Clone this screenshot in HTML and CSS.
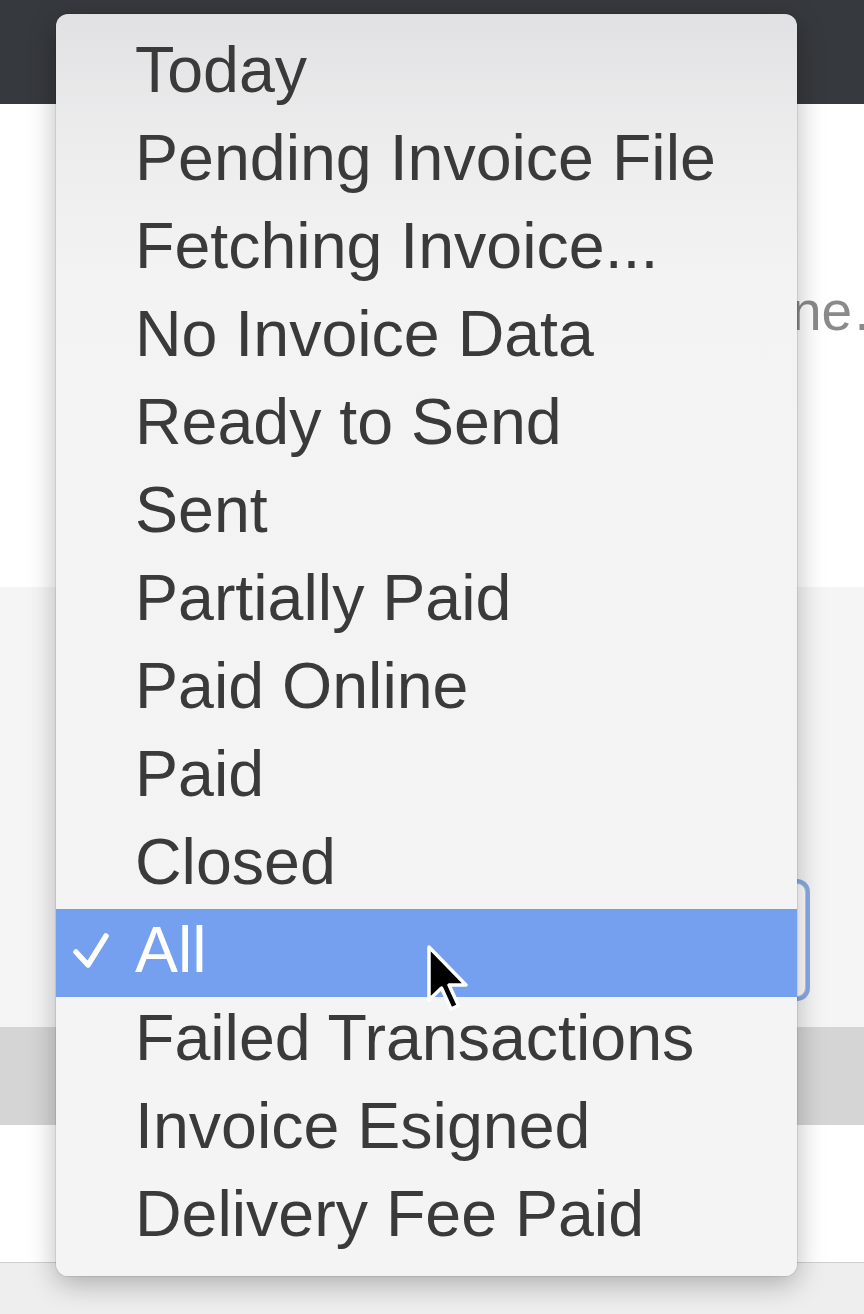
FILE: index.html
```html
<!DOCTYPE html>
<html lang="en">
<head>
<meta charset="utf-8">
<title>Status menu</title>
<link rel="stylesheet" href="styles.css">
</head>
<body>
<div class="page">
  <header class="topbar"></header>
  <section class="sec-white">
    <span class="ghost-label">ne .</span>
  </section>
  <section class="sec-grey">
    <div class="select-box"></div>
  </section>
  <section class="sec-band"></section>
  <section class="sec-white2"></section>
  <section class="sec-foot"></section>

  <div class="menu">
    <div class="item"><span class="check"></span><span class="label">Today</span></div>
    <div class="item"><span class="check"></span><span class="label">Pending Invoice File</span></div>
    <div class="item"><span class="check"></span><span class="label">Fetching Invoice...</span></div>
    <div class="item"><span class="check"></span><span class="label">No Invoice Data</span></div>
    <div class="item"><span class="check"></span><span class="label">Ready to Send</span></div>
    <div class="item"><span class="check"></span><span class="label">Sent</span></div>
    <div class="item"><span class="check"></span><span class="label">Partially Paid</span></div>
    <div class="item"><span class="check"></span><span class="label">Paid Online</span></div>
    <div class="item"><span class="check"></span><span class="label">Paid</span></div>
    <div class="item"><span class="check"></span><span class="label">Closed</span></div>
    <div class="item selected">
      <span class="check">
        <svg width="79" height="88" viewBox="0 0 79 88"><path d="M20 43 L32 56 L50 27" fill="none" stroke="#ffffff" stroke-width="5.5" stroke-linecap="round" stroke-linejoin="round"/></svg>
      </span>
      <span class="label">All</span>
    </div>
    <div class="item"><span class="check"></span><span class="label">Failed Transactions</span></div>
    <div class="item"><span class="check"></span><span class="label">Invoice Esigned</span></div>
    <div class="item"><span class="check"></span><span class="label">Delivery Fee Paid</span></div>
  </div>

  <svg class="cursor" width="48" height="72" viewBox="-4 -4 48 72">
    <path d="M0 0 L0 53 L12.5 41 L22 62 L29.5 58.5 L20 38 L37 38 Z" fill="#000" stroke="#fff" stroke-width="3.5" stroke-linejoin="round"/>
  </svg>
</div>
</body>
</html>
```

FILE: styles.css
```css
html, body {
  margin: 0;
  padding: 0;
}
body {
  width: 864px;
  height: 1314px;
  overflow: hidden;
  font-family: "Liberation Sans", Arial, sans-serif;
  background: #efefef;
}
.page {
  position: relative;
  width: 864px;
  height: 1314px;
  display: flex;
  flex-direction: column;
}
.topbar {
  height: 104px;
  background: #36393d;
  flex: none;
}
.sec-white {
  height: 483px;
  background: #ffffff;
  flex: none;
  padding-top: 176px;
  padding-left: 791px;
  box-sizing: border-box;
  overflow: hidden;
}
.ghost-label {
  display: block;
  font-size: 55px;
  line-height: 62px;
  color: #8a8a8a;
  white-space: nowrap;
  word-spacing: -13px;
}
.sec-grey {
  height: 440px;
  background: #f5f5f5;
  flex: none;
  padding-top: 296px;
  padding-left: 500px;
  box-sizing: border-box;
}
.select-box {
  width: 306px;
  height: 114px;
  box-sizing: border-box;
  border: 1px solid #b9c7e4;
  border-radius: 9px;
  background: #ffffff;
  box-shadow: 0 0 0 4px rgba(104, 146, 222, 0.75);
}
.sec-band {
  height: 98px;
  background: #d5d5d5;
  flex: none;
}
.sec-white2 {
  height: 137px;
  background: #ffffff;
  flex: none;
  border-bottom: 1px solid #cfcfcf;
}
.sec-foot {
  flex: 1;
  background: #eeeeee;
}

.menu {
  position: absolute;
  left: 56px;
  top: 14px;
  width: 741px;
  height: 1262px;
  box-sizing: border-box;
  padding-top: 15px;
  border-radius: 12px;
  background: linear-gradient(to bottom, #e1e1e3 0px, #ececed 120px, #f3f3f3 260px, #f4f4f4 100%);
  box-shadow: 0 8px 28px rgba(0, 0, 0, 0.28), 0 0 0 1px rgba(0, 0, 0, 0.08);
  overflow: hidden;
}
.item {
  display: flex;
  height: 88px;
  box-sizing: border-box;
  padding-bottom: 5px;
  font-size: 64.5px;
  line-height: 83px;
  color: #3a3a3a;
  white-space: nowrap;
}
.item.selected {
  background: #74a0ef;
  color: #ffffff;
}
.check {
  flex: none;
  width: 79px;
  height: 83px;
  display: flex;
}
.check svg {
  display: block;
}
.cursor {
  position: absolute;
  left: 425px;
  top: 943px;
}
```
